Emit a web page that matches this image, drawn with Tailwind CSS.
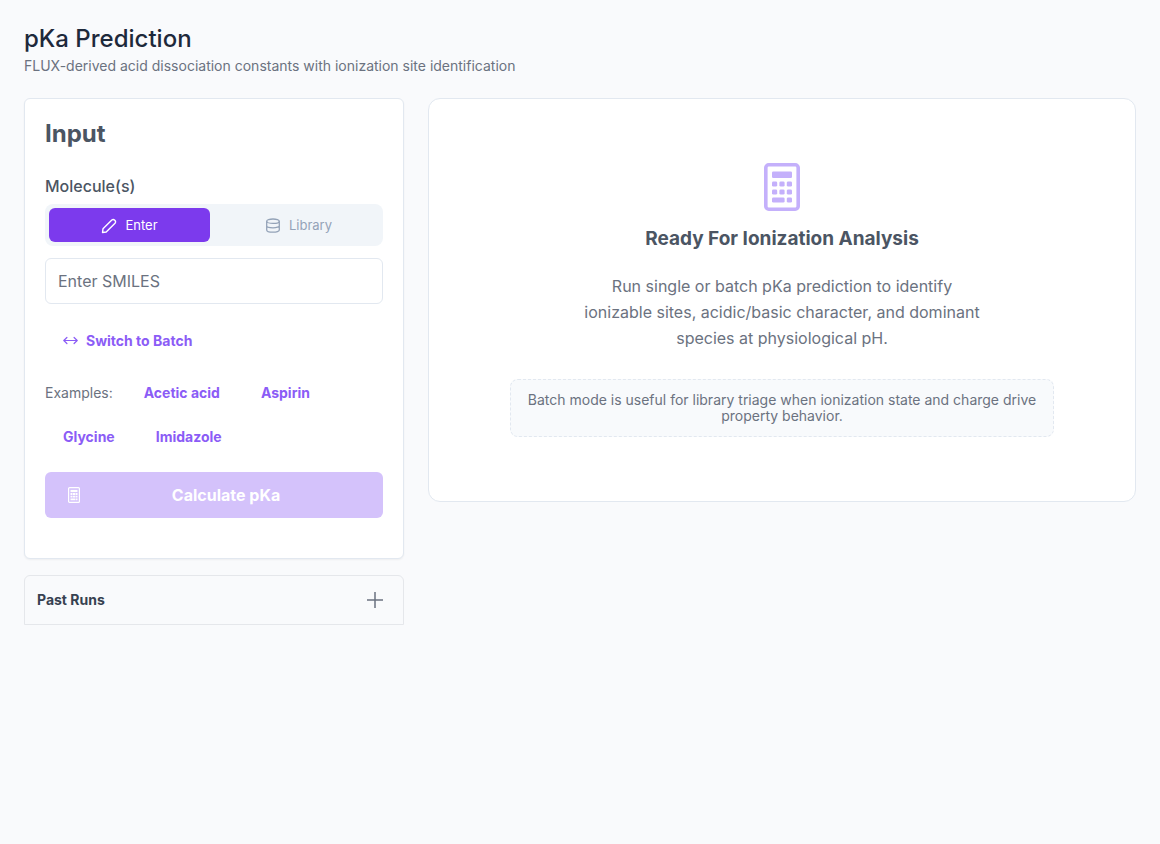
<!DOCTYPE html>
<html lang="en">
<head>
<meta charset="utf-8">
<meta name="viewport" content="width=device-width, initial-scale=1">
<title>pKa Prediction</title>
<script src="https://cdn.jsdelivr.net/npm/@tailwindcss/browser@4"></script>
</head>
<body class="min-h-screen bg-[#f9fafc] p-6 font-[Inter,sans-serif] text-base text-[#4b5563]">
<svg class="hidden" aria-hidden="true">
  <symbol id="calculator" viewBox="0 0 24 24">
    <rect x="3.9" y="0.9" width="16.2" height="22.2" rx="1.5" fill="none" stroke="currentColor" stroke-width="1.8"/>
    <g fill="currentColor">
      <rect x="7" y="4.2" width="10" height="3.3" rx="0.6"/>
      <rect x="7" y="9.2" width="2.6" height="2.6" rx="0.7"/><rect x="10.7" y="9.2" width="2.6" height="2.6" rx="0.7"/><rect x="14.4" y="9.2" width="2.6" height="2.6" rx="0.7"/>
      <rect x="7" y="13.2" width="2.6" height="2.6" rx="0.7"/><rect x="10.7" y="13.2" width="2.6" height="2.6" rx="0.7"/><rect x="14.4" y="13.2" width="2.6" height="2.6" rx="0.7"/>
      <rect x="7" y="17.2" width="6.3" height="2.6" rx="0.7"/><rect x="14.4" y="17.2" width="2.6" height="2.6" rx="0.7"/>
    </g>
  </symbol>
</svg>
<header>
  <h1 class="text-2xl leading-[30px] font-medium text-[#1e293b]">pKa Prediction</h1>
  <p class="mt-[2px] text-sm text-[#6b7280]">FLUX-derived acid dissociation constants with ionization site identification</p>
</header>
<main class="mt-[22px] grid grid-cols-[380px_1fr] items-start gap-6">
  <div class="flex flex-col gap-4">
    <form class="rounded-md border border-slate-200 bg-white px-5 pt-5 pb-10 shadow-xs">
      <h2 class="text-2xl leading-[30px] font-bold">Input</h2>
      <label for="smiles" class="mt-[25px] block font-medium">Molecule(s)</label>
      <div class="mt-[6px] grid grid-cols-2 gap-2 rounded-lg bg-[#f1f5f9] p-1 text-[13px]">
        <button type="button" class="flex h-[34px] items-center justify-center gap-2 rounded-md bg-[#7c3aed] pt-px text-white">
          <svg class="size-4" viewBox="0 0 16 16" fill="none" stroke="currentColor" stroke-width="1.4" stroke-linejoin="round" aria-hidden="true"><path d="M1.5 14.5 2 10.8 10.8 2Q12.3.8 13.8 2.2 15.2 3.7 14 5.2L5.2 14Z"/></svg>
          Enter
        </button>
        <button type="button" class="flex h-[34px] items-center justify-center gap-2 rounded-md pt-px text-[#94a3b8]">
          <svg class="size-4" viewBox="0 0 16 16" fill="none" stroke="currentColor" stroke-width="1.3" aria-hidden="true"><ellipse cx="8" cy="3.2" rx="6.3" ry="2.2"/><path d="M1.7 3.2V12C1.7 13.3 4.5 14.2 8 14.2S14.3 13.3 14.3 12V3.2M1.7 7.7C1.7 9 4.5 9.8 8 9.8S14.3 9 14.3 7.7"/></svg>
          Library
        </button>
      </div>
      <input id="smiles" type="text" placeholder="Enter SMILES" class="mt-3 block h-[46px] w-full rounded-md border border-slate-200 bg-white px-3 placeholder:text-[#6b7280]">
      <button type="button" class="mt-[19px] flex h-9 items-center gap-2 px-[18px] text-sm font-bold text-[#8b5cf6]">
        <svg class="size-[15px]" viewBox="0 0 15 15" fill="none" stroke="currentColor" stroke-width="1.2" stroke-linecap="round" stroke-linejoin="round" aria-hidden="true"><path d="M.8 6.5H14.2M3.9 3.5.8 6.5l3.1 3M11.1 3.5l3.1 3-3.1 3"/></svg>
        Switch to Batch
      </button>
      <div class="mt-4 flex flex-wrap items-center gap-x-[5px] gap-y-2 text-sm font-bold text-[#8b5cf6]">
        <span class="mr-2 font-normal text-[#6b7280]">Examples:</span>
        <button type="button" class="h-9 px-[18px]">Acetic acid</button>
        <button type="button" class="h-9 px-[18px]">Aspirin</button>
        <button type="button" class="h-9 px-[18px]">Glycine</button>
        <button type="button" class="h-9 px-[18px]">Imidazole</button>
      </div>
      <button type="submit" disabled class="mt-[17px] flex h-[46px] w-full items-center rounded-md bg-[#d4c2fb] px-[21px] font-bold text-white">
        <svg class="size-4" viewBox="0 0 16 16" fill="none" stroke="currentColor" aria-hidden="true"><rect x="2.6" y=".6" width="10.8" height="14.8" rx="1" stroke-width="1.2"/><path d="M4.5 4H11.5" stroke-width="2.2"/><path d="M4.5 7H6.5M7 7H9M9.5 7H11.5M4.5 9.7H6.5M7 9.7H9M9.5 9.7H11.5M4.5 12.4H9M9.5 12.4H11.5" stroke-width="1.8"/></svg>
        <span class="flex-1 pl-2 text-center">Calculate pKa</span>
      </button>
    </form>
    <button type="button" class="flex h-[50px] items-center justify-between rounded-t-md border border-gray-200 pr-5 pl-3 text-sm font-bold text-[#374151]">
      Past Runs
      <svg class="size-4 text-[#6b7280]" viewBox="0 0 16 16" fill="none" stroke="currentColor" stroke-width="1.5" aria-hidden="true"><path d="M8 0V16M0 8H16"/></svg>
    </button>
  </div>
  <section class="flex flex-col items-center rounded-xl border border-slate-200 bg-white px-6 py-16 text-center">
    <svg class="size-12 text-[#c4b0fb]" aria-hidden="true"><use href="#calculator"/></svg>
    <h2 class="mt-[14px] text-[19px] leading-7 font-bold">Ready For Ionization Analysis</h2>
    <p class="mt-5 max-w-[400px] leading-[26px] text-[#6b7280]">Run single or batch pKa prediction to identify ionizable sites, acidic/basic character, and dominant species at physiological pH.</p>
    <p class="mt-7 max-w-[544px] rounded-lg border border-dashed border-slate-200 bg-slate-50 px-4 py-3 text-sm leading-4 text-[#6b7280]">Batch mode is useful for library triage when ionization state and charge drive property behavior.</p>
  </section>
</main>
</body>
</html>
